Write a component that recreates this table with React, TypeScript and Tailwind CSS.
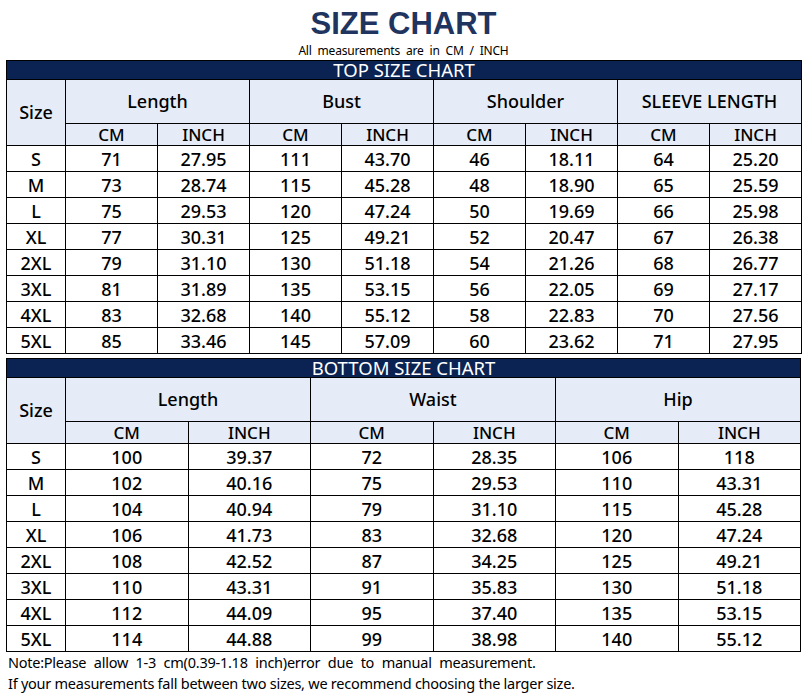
import React from 'react';

const topRows = [
  ['S', '71', '27.95', '111', '43.70', '46', '18.11', '64', '25.20'],
  ['M', '73', '28.74', '115', '45.28', '48', '18.90', '65', '25.59'],
  ['L', '75', '29.53', '120', '47.24', '50', '19.69', '66', '25.98'],
  ['XL', '77', '30.31', '125', '49.21', '52', '20.47', '67', '26.38'],
  ['2XL', '79', '31.10', '130', '51.18', '54', '21.26', '68', '26.77'],
  ['3XL', '81', '31.89', '135', '53.15', '56', '22.05', '69', '27.17'],
  ['4XL', '83', '32.68', '140', '55.12', '58', '22.83', '70', '27.56'],
  ['5XL', '85', '33.46', '145', '57.09', '60', '23.62', '71', '27.95'],
];

const bottomRows = [
  ['S', '100', '39.37', '72', '28.35', '106', '118'],
  ['M', '102', '40.16', '75', '29.53', '110', '43.31'],
  ['L', '104', '40.94', '79', '31.10', '115', '45.28'],
  ['XL', '106', '41.73', '83', '32.68', '120', '47.24'],
  ['2XL', '108', '42.52', '87', '34.25', '125', '49.21'],
  ['3XL', '110', '43.31', '91', '35.83', '130', '51.18'],
  ['4XL', '112', '44.09', '95', '37.40', '135', '53.15'],
  ['5XL', '114', '44.88', '99', '38.98', '140', '55.12'],
];

function SizeTable({ title, groups, rows, colWidth }: { title: string; groups: string[]; rows: string[][]; colWidth: string }) {
  return (
    <table className="w-full table-fixed border-collapse text-black">
      <colgroup>
        <col className="w-[59px]" />
        {groups.flatMap((g) => [<col key={g + 'a'} className={colWidth} />, <col key={g + 'b'} className={colWidth} />])}
      </colgroup>
      <thead>
        <tr className="h-[19px]">
          <th colSpan={groups.length * 2 + 1} className="border border-black bg-[#0b2352] p-0 text-[18.5px] font-normal leading-[18px] text-white">
            {title}
          </th>
        </tr>
        <tr className="h-[44px]">
          <th rowSpan={2} className="border border-black bg-[#e5ecf7] p-0 text-[18px] font-medium">Size</th>
          {groups.map((g) => (
            <th key={g} colSpan={2} className="border border-black bg-[#e5ecf7] p-0 text-[18px] font-medium">
              {g}
            </th>
          ))}
        </tr>
        <tr className="h-[22px]">
          {groups.flatMap((g) => [
            <th key={g + 'cm'} className="border border-black bg-[#e5ecf7] p-0 text-[17px] font-medium leading-[20px]">CM</th>,
            <th key={g + 'in'} className="border border-black bg-[#e5ecf7] p-0 text-[17px] font-medium leading-[20px]">INCH</th>,
          ])}
        </tr>
      </thead>
      <tbody>
        {rows.map((r) => (
          <tr key={r[0]} className="h-[26px]">
            {r.map((v, i) => (
              <td key={i} className="border border-black p-0 text-center text-[18px] font-medium leading-[24px]">
                {v}
              </td>
            ))}
          </tr>
        ))}
      </tbody>
    </table>
  );
}

export default function App() {
  return (
    <div className="h-[693px] w-[807px] bg-white font-['Noto_Sans','Liberation_Sans',sans-serif]">
      <div className="pt-[6px] text-center font-['Liberation_Sans',Arial,sans-serif] text-[31px] font-bold leading-[36px] text-[#1f3560]">
        SIZE CHART
      </div>
      <div className="text-center text-[12px] leading-[18px] tracking-[-0.2px] [word-spacing:3px]">All measurements are in CM / INCH</div>
      <div className="mx-[6px] w-[795px]">
        <SizeTable title="TOP SIZE CHART" groups={['Length', 'Bust', 'Shoulder', 'SLEEVE LENGTH']} rows={topRows} colWidth="w-[92px]" />
        <div className="h-[4px]" />
        <SizeTable title="BOTTOM SIZE CHART" groups={['Length', 'Waist', 'Hip']} rows={bottomRows} colWidth="w-[122.5px]" />
      </div>
      <div className="px-[8px] text-[14.5px] leading-[21px] tracking-[-0.25px]">
        <div className="[word-spacing:4px]">Note:Please allow 1-3 cm(0.39-1.18 inch)error due to manual measurement.</div>
        <div>If your measurements fall between two sizes, we recommend choosing the larger size.</div>
      </div>
    </div>
  );
}
